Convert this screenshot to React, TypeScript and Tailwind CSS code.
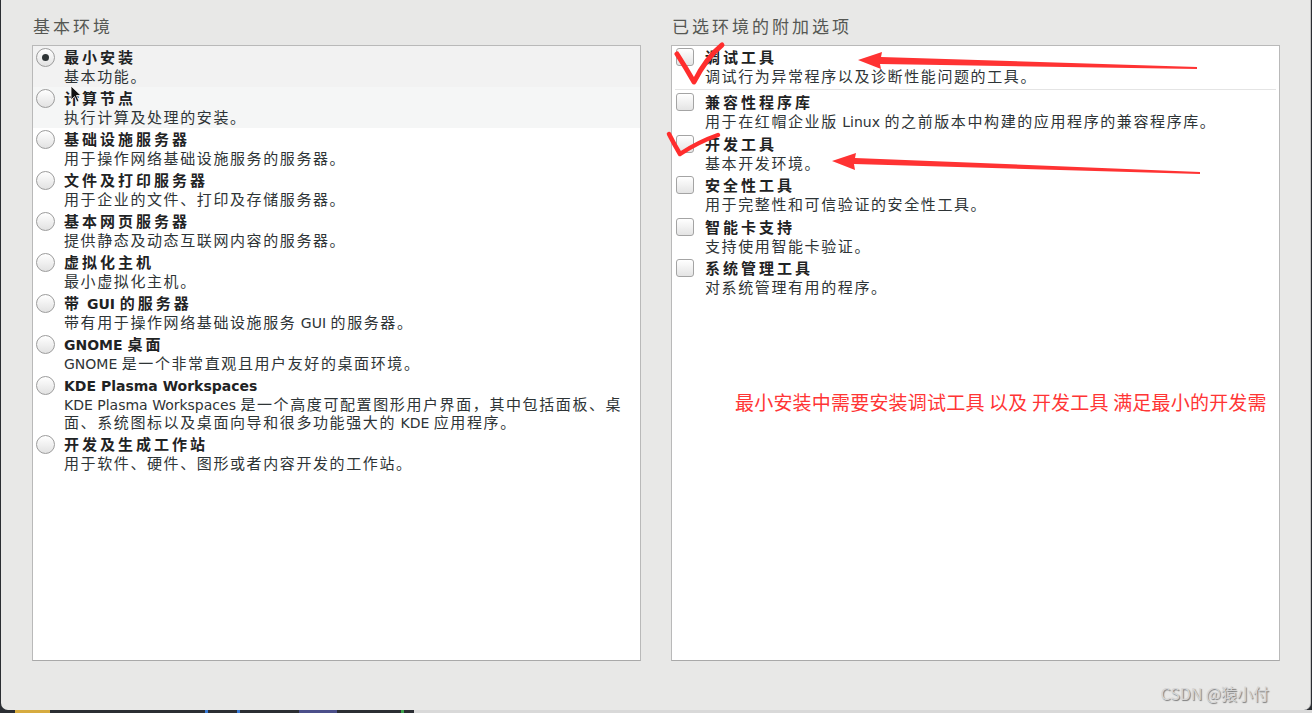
import React from "react";

const FONT = "font-['DejaVu_Sans','Noto_Sans_CJK_SC',sans-serif]";

const BASE_ENVS = [
  { title: "最小安装", desc: ["基本功能。"] },
  { title: "计算节点", desc: ["执行计算及处理的安装。"] },
  { title: "基础设施服务器", desc: ["用于操作网络基础设施服务的服务器。"] },
  { title: "文件及打印服务器", desc: ["用于企业的文件、打印及存储服务器。"] },
  { title: "基本网页服务器", desc: ["提供静态及动态互联网内容的服务器。"] },
  { title: "虚拟化主机", desc: ["最小虚拟化主机。"] },
  { title: "带 GUI 的服务器", desc: ["带有用于操作网络基础设施服务 GUI 的服务器。"] },
  { title: "GNOME 桌面", desc: ["GNOME 是一个非常直观且用户友好的桌面环境。"] },
  {
    title: "KDE Plasma Workspaces",
    desc: [
      "KDE Plasma Workspaces 是一个高度可配置图形用户界面，其中包括面板、桌",
      "面、系统图标以及桌面向导和很多功能强大的 KDE 应用程序。",
    ],
  },
  { title: "开发及生成工作站", desc: ["用于软件、硬件、图形或者内容开发的工作站。"] },
];

const ADDONS = [
  { title: "调试工具", desc: "调试行为异常程序以及诊断性能问题的工具。" },
  { title: "兼容性程序库", desc: "用于在红帽企业版 Linux 的之前版本中构建的应用程序的兼容程序库。" },
  { title: "开发工具", desc: "基本开发环境。" },
  { title: "安全性工具", desc: "用于完整性和可信验证的安全性工具。" },
  { title: "智能卡支持", desc: "支持使用智能卡验证。" },
  { title: "系统管理工具", desc: "对系统管理有用的程序。" },
];

// CJK glyphs in the installer font run wider than the latin ones
function Mixed({ text, cjk }: { text: string; cjk: string }) {
  const parts = text.split(/([\u3000-\u303f\u4e00-\u9fff\uff00-\uffef]+)/);
  return (
    <>
      {parts.map((p, i) =>
        i % 2 ? (
          <span key={i} className={cjk}>
            {p}
          </span>
        ) : (
          <React.Fragment key={i}>{p}</React.Fragment>
        )
      )}
    </>
  );
}

function Radio({ checked }: { checked?: boolean }) {
  return (
    <div className="w-[19px] h-[19px] shrink-0 rounded-full border border-[#9c9c9c] bg-gradient-to-b from-white to-[#e2e2e2] flex items-center justify-center">
      {checked && <div className="w-[7px] h-[7px] rounded-full bg-[#2e3436]" />}
    </div>
  );
}

function Checkbox() {
  return (
    <div className="w-[18px] h-[18px] shrink-0 rounded-[3px] border border-[#a4a4a4] bg-gradient-to-b from-white to-[#e4e4e4]" />
  );
}

function Title({ text }: { text: string }) {
  return (
    <div className="h-[20px] leading-[20px] text-[14px] font-bold text-[#1f2324] whitespace-nowrap">
      <Mixed text={text} cjk="text-[15px] tracking-[3px]" />
    </div>
  );
}

function Desc({ text }: { text: string }) {
  return (
    <div className="h-[18px] leading-[18px] text-[14px] text-[#2e3436] whitespace-nowrap">
      <Mixed text={text} cjk="text-[15px] tracking-[1.6px]" />
    </div>
  );
}

function Annotations() {
  return (
    <svg
      className="absolute inset-0 pointer-events-none"
      width="1312"
      height="713"
      viewBox="0 0 1312 713"
    >
      {/* checkmarks */}
      <path
        d="M677 54 Q686 68 694 82 Q706 58 722 45"
        fill="none"
        stroke="#ff2d2d"
        strokeWidth="5"
        strokeLinecap="round"
        strokeLinejoin="round"
      />
      <path
        d="M669 134 Q674 144 680 154 Q698 142 718 135"
        fill="none"
        stroke="#ff2d2d"
        strokeWidth="4.5"
        strokeLinecap="round"
        strokeLinejoin="round"
      />
      {/* arrows */}
      <path d="M858 60 L882 52 L881 57 L1197 67 L1197 69 L880 64 L881 69 Z" fill="#ff3333" />
      <path d="M832 161 L856 153 L855 158 L1200 172 L1200 174 L854 164 L855 170 Z" fill="#ff3333" />
      {/* mouse pointer */}
      <path d="M71 86 L71 100 L74.5 96.5 L77 102 L79 101 L76.5 95.5 L81 95.5 Z" fill="#111" stroke="#fff" strokeWidth="0.8" />
    </svg>
  );
}

export default function App() {
  return (
    <div className={`relative w-[1312px] h-[713px] overflow-hidden bg-[#2b2e33] ${FONT}`}>
      <div className="ml-[1px] w-[1310px] h-[710px] rounded-b-[7px] bg-[#e8e8e7] border-r border-[#c2c2c2] px-[31px] pt-[14px]">
        <div className="grid grid-cols-[609px_609px] gap-[30px]">
          {/* base environment */}
          <div className="flex flex-col">
            <div className="h-[31px] leading-[26px] pl-[1px] text-[17px] text-[#555753] whitespace-nowrap">
              <Mixed text="基本环境" cjk="tracking-[3px] text-[17px]" />
            </div>
            <div className="h-[616px] bg-white border border-[#b9b9b9] border-b-[#a9a9a9]">
              {BASE_ENVS.map((env, i) => (
                <div
                  key={env.title}
                  className={`flex gap-[9px] pl-[3px] pt-[2px] pb-[1px] ${
                    i === 0 ? "bg-[#f2f2f2]" : i === 1 ? "bg-[#f5f6f6]" : ""
                  }`}
                >
                  <Radio checked={i === 0} />
                  <div className="flex flex-col">
                    <Title text={env.title} />
                    {env.desc.map((d) => (
                      <Desc key={d} text={d} />
                    ))}
                  </div>
                </div>
              ))}
            </div>
          </div>

          {/* add-ons */}
          <div className="flex flex-col">
            <div className="h-[31px] leading-[26px] pl-[1px] text-[17px] text-[#555753] whitespace-nowrap">
              <Mixed text="已选环境的附加选项" cjk="tracking-[3px] text-[17px]" />
            </div>
            <div className="h-[616px] bg-white border border-[#b9b9b9] border-b-[#a9a9a9]">
              {ADDONS.map((a, i) => (
                <div
                  key={a.title}
                  className={
                    i === 0
                      ? "h-[44px] mx-[3px] pt-[2px] border-b border-[#e4e4e4]"
                      : "h-[41.5px] pt-[3px]"
                  }
                >
                  <div className={`flex gap-[11px] ${i === 0 ? "pl-[1px]" : "pl-[4px]"}`}>
                    <Checkbox />
                    <div className="flex flex-col">
                      <Title text={a.title} />
                      <Desc text={a.desc} />
                    </div>
                  </div>
                </div>
              ))}
              <div className="mt-[92px] pl-[63px] text-[19px] tracking-[0.2px] leading-[24px] text-[#ff3535] whitespace-nowrap font-['Noto_Sans_CJK_SC',sans-serif]">
                最小安装中需要安装调试工具 以及 开发工具 满足最小的开发需
              </div>
            </div>
          </div>
        </div>

        <div className="flex justify-end pr-[10px] mt-[21px]">
          <span className="text-[16px] leading-[22px] text-[#d6d6d6] [text-shadow:1px_1px_1px_#7a7a7a] font-['Noto_Sans_CJK_SC',sans-serif]">
            CSDN @猿小付
          </span>
        </div>
      </div>

      {/* taskbar edge */}
      <div className="flex h-[3px]">
        <div className="w-[414px] h-[3px] bg-[#2b2e33] flex">
          <div className="ml-[15px] w-[35px] bg-[#d6ab3f]" />
          <div className="ml-[155px] w-[3px] bg-[#3a7bd5]" />
          <div className="ml-[29px] w-[3px] bg-[#3a7bd5]" />
          <div className="ml-[59px] w-[38px] bg-[#4b4f8a]" />
          <div className="ml-[64px] w-[3px] bg-[#3fa34d]" />
        </div>
        <div className="flex-1 bg-[#d9d9d9]" />
      </div>

      <Annotations />
    </div>
  );
}
